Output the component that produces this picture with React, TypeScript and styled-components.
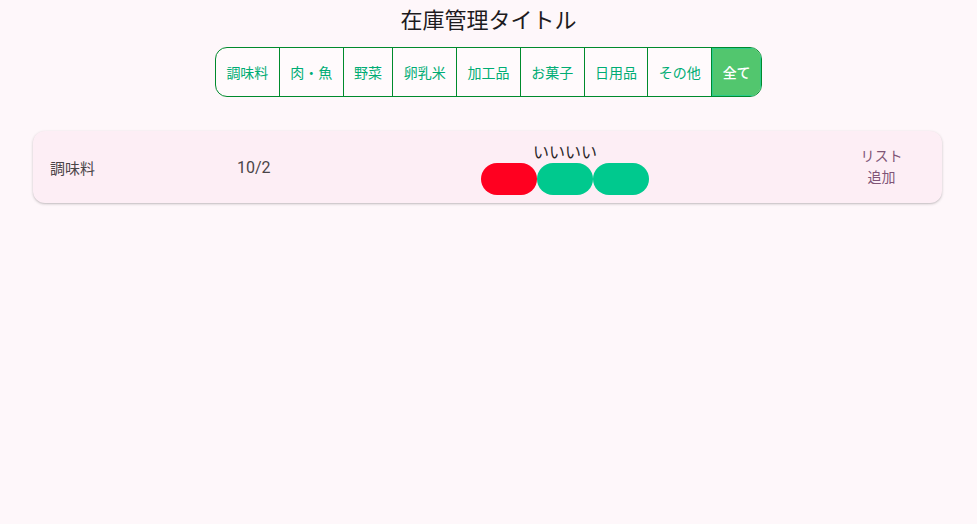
import React from "react";
import styled, { createGlobalStyle } from "styled-components";

const Global = createGlobalStyle`
  html, body { margin: 0; padding: 0; background: #fef7fa; }
  body { font-family: Roboto, "Noto Sans CJK JP", sans-serif; }
`;

const Page = styled.div`
  min-height: 524px;
  background: #fef7fa;
  display: flex;
  flex-direction: column;
  align-items: center;
`;

const Title = styled.h1`
  margin: 6px 0 0;
  font-family: Roboto, "Noto Sans CJK JP", sans-serif;
  font-weight: 400;
  font-size: 22px;
  line-height: 30px;
  color: #1d1b1e;
`;

const Group = styled.div`
  margin-top: 11px;
  display: flex;
  border: 1px solid #008a2c;
  border-radius: 12px;
  overflow: hidden;
  background: #fffafc;
  height: 48px;
`;

const Tab = styled.button<{ $active?: boolean }>`
  font-family: Roboto, "Noto Sans CJK JP", sans-serif;
  font-size: 14px;
  padding: 0 10.4px;
  border: none;
  border-left: 1px solid #008a2c;
  background: ${(p) => (p.$active ? "#52c66e" : "transparent")};
  color: ${(p) => (p.$active ? "#ffffff" : "#00ad74")};
  font-weight: ${(p) => (p.$active ? 500 : 400)};
  &:first-child { border-left: none; }
  ${(p) => p.$active && "box-shadow: inset 0 0 0 1px #2ccb8a;"}
`;

const List = styled.div`
  align-self: stretch;
  margin: 34px 35px 0 33px;
`;

const Card = styled.div`
  display: flex;
  align-items: center;
  height: 72px;
  padding: 0 24px 0 17px;
  background: #fdeef5;
  border-radius: 12px;
  box-shadow: 0 1px 3px rgba(0, 0, 0, 0.2), 0 1px 1px rgba(0, 0, 0, 0.06);
`;

const Name = styled.div`
  width: 187px;
  font-size: 15px;
  color: #4a4548;
`;

const DateText = styled.div`
  width: 244px;
  font-size: 16px;
  color: #4a4548;
`;

const Middle = styled.div`
  display: flex;
  flex-direction: column;
  align-items: center;
  padding-top: 4px;
`;

const Label = styled.div`
  font-size: 16px;
  line-height: 20px;
  color: #2b2629;
`;

const Pills = styled.div`
  display: flex;
`;

const Pill = styled.div<{ $color: string }>`
  width: 56px;
  height: 32px;
  border-radius: 16px;
  background: ${(p) => p.$color};
`;

const Spacer = styled.div`
  flex: 1;
`;

const AddButton = styled.button`
  width: 70px;
  border: none;
  background: transparent;
  font-family: Roboto, "Noto Sans CJK JP", sans-serif;
  font-size: 14px;
  line-height: 21px;
  color: #7f5577;
  padding: 0 3px 0 0;
`;

export default function App() {
  const tabs = ["調味料", "肉・魚", "野菜", "卵乳米", "加工品", "お菓子", "日用品", "その他", "全て"];
  return (
    <>
      <Global />
      <Page>
        <Title>在庫管理タイトル</Title>
        <Group>
          {tabs.map((t, i) => (
            <Tab key={t} $active={i === tabs.length - 1}>
              {t}
            </Tab>
          ))}
        </Group>
        <List>
          <Card>
            <Name>調味料</Name>
            <DateText>10/2</DateText>
            <Middle>
              <Label>いいいい</Label>
              <Pills>
                <Pill $color="#ff0020" />
                <Pill $color="#00c98e" />
                <Pill $color="#00c98e" />
              </Pills>
            </Middle>
            <Spacer />
            <AddButton>
              リスト
              <br />
              追加
            </AddButton>
          </Card>
        </List>
      </Page>
    </>
  );
}
